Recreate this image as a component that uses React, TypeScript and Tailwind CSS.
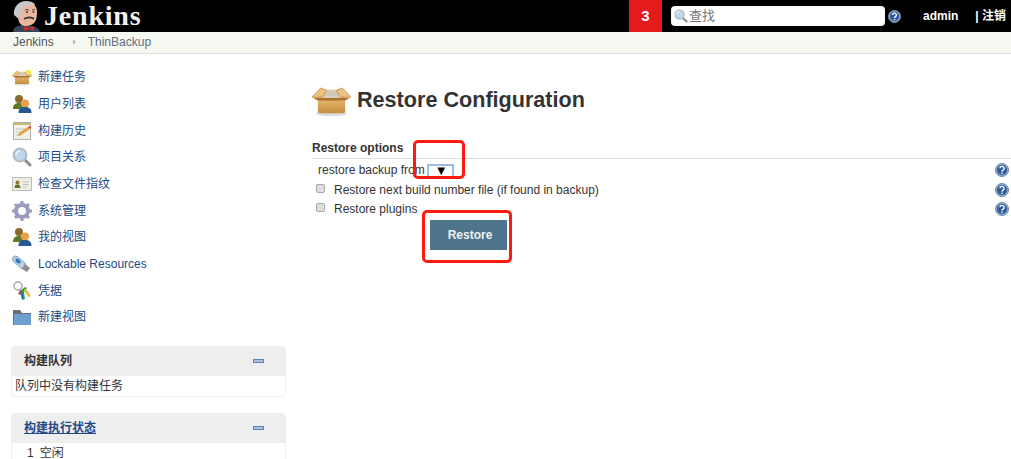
import type { ReactNode } from "react"

const font = "font-['Liberation_Sans','Noto_Sans_CJK_SC',sans-serif]"

function HelpIcon({ size = 14 }: { size?: number }) {
  return (
    <svg width={size} height={size} viewBox="0 0 14 14" className="shrink-0">
      <circle cx="7" cy="7" r="6.5" fill="#8fa8c8" stroke="#6f8db5" strokeWidth="1" />
      <circle cx="7" cy="7" r="5" fill="#2f5c98" />
      <path d="M4.9 5.3a2.100 2 0 1 1 3.100 1.800c-.7.4-1 .8-1 1.600" fill="none" stroke="#fff" strokeWidth="1.400" />
      <rect x="6.300" y="9.600" width="1.400" height="1.400" fill="#fff" />
    </svg>
  )
}

function Box({ size = 24, star = false, id }: { size?: number; star?: boolean; id: string }) {
  return (
    <svg width={size} height={size * 0.8} viewBox="0 0 40 32">
      <defs>
        <linearGradient id={id} x1="0" y1="0" x2="0" y2="1">
          <stop offset="0" stopColor="#e9bc73" />
          <stop offset="1" stopColor="#c48d3f" />
        </linearGradient>
      </defs>
      <ellipse cx="20" cy="29.500" rx="16" ry="2.500" fill="#dcdcdc" />
      <path d="M6 13h28v14q0 2-2 2H8q-2 0-2-2z" fill={`url(#${id})`} />
      <path d="M8 4h24l1 9H7z" fill="#f1e8d6" />
      <path d="M12 7q8-3 16 0v5H12z" fill="#cfc8b8" />
      <path d="M9 3 0 12.500h11l4-7zM31 3l9 9.500H29l-4-7z" fill="#ecc27f" stroke="#b98238" strokeWidth=".7" />
      <path d="M1 13h38l-5 3H6z" fill="#a9712c" />
      {star && <circle cx="33" cy="5" r="5" fill="#f5ec4f" />}
    </svg>
  )
}

function Users() {
  return (
    <svg width="20" height="20" viewBox="0 0 20 20">
      <circle cx="7" cy="5" r="4" fill="#8a6a2a" />
      <path d="M1 15c0-5 3-6 6-6s6 1 6 6z" fill="#5f7a25" />
      <circle cx="13" cy="9.500" r="4" fill="#e8a04a" />
      <path d="M6.500 19c0-5 3-6 6.500-6s6.500 1 6.500 6z" fill="#27598f" />
    </svg>
  )
}

function History() {
  return (
    <svg width="20" height="20" viewBox="0 0 20 20">
      <rect x="1.500" y="1.500" width="17" height="17" fill="#f2f0e4" stroke="#b0b0b0" />
      <path d="M2 2h16v2H2z" fill="#c9b96c" />
      <path d="M4 8h10M4 11h7M4 14h5" stroke="#c0c0c0" />
      <path d="m6 15 1-3 9-6 2 2-9 6z" fill="#e0a040" />
      <path d="m16 6 2 2 1.500-1.500-2-1.500z" fill="#d9443a" />
    </svg>
  )
}

function Search({ size = 20 }: { size?: number }) {
  return (
    <svg width={size} height={size} viewBox="0 0 20 20">
      <path d="m12 12 6 6" stroke="#8d8d8d" strokeWidth="3" strokeLinecap="round" />
      <circle cx="8" cy="8" r="6.500" fill="#bcd6ee" stroke="#b4bcc4" strokeWidth="2" />
      <path d="M4 8a4 4 0 0 1 4-4" stroke="#eef6fc" strokeWidth="1.500" fill="none" />
    </svg>
  )
}

function Fingerprint() {
  return (
    <svg width="20" height="16" viewBox="0 0 20 16">
      <rect x=".5" y="1.500" width="19" height="13" fill="#eeeee6" stroke="#c0c0b8" />
      <circle cx="5.500" cy="6.500" r="2" fill="#8a7a30" />
      <path d="M2.500 12c0-3 1.500-3.500 3-3.500s3 .5 3 3.500z" fill="#5f7a25" />
      <path d="M11 6h6M11 8.500h6M11 11h4" stroke="#c4c4c4" />
    </svg>
  )
}

function Gear() {
  return (
    <svg width="20" height="20" viewBox="0 0 20 20">
      <circle cx="10" cy="10" r="6" fill="none" stroke="#9a9abb" strokeWidth="4" />
      <path d="M10 0v4M10 16v4M0 10h4M16 10h4M3 3l3 3M14 14l3 3M17 3l-3 3M6 14l-3 3" stroke="#9a9abb" strokeWidth="3" />
    </svg>
  )
}

function Usb() {
  return (
    <svg width="20" height="20" viewBox="0 0 20 20">
      <path d="M1 3q2-2 5 0l8 7-4 5-8-7q-3-2-1-5z" fill="#b7d3ea" stroke="#8aa3b8" />
      <ellipse cx="6" cy="7" rx="3" ry="1.800" transform="rotate(40 6 7)" fill="#2a78c4" />
      <path d="m13 10 5 4-3 4-5-3z" fill="#8e8e8e" />
    </svg>
  )
}

function Keys() {
  return (
    <svg width="20" height="20" viewBox="0 0 20 20">
      <circle cx="6" cy="5" r="4" fill="none" stroke="#a8a8a8" strokeWidth="1.500" />
      <path d="m9 9 4-3 2 1-3 4 1 7-3 1z" fill="#35a04a" />
      <path d="m12 8 3 1 4 6-2 1-4-4z" fill="#e0c040" />
      <path d="m8 9-2 4 3 1 1-4z" fill="#d9443a" />
      <path d="m9 10 2 8" stroke="#2a6fb0" strokeWidth="2" />
    </svg>
  )
}

function Folder() {
  return (
    <svg width="20" height="18" viewBox="0 0 20 18">
      <path d="M1 2h7l2 3h9v12H1z" fill="#6b6f74" />
      <path d="M2 6h17v11H2z" fill="#6e9fcf" />
    </svg>
  )
}

const tasks: { icon: ReactNode; label: string }[] = [
  { icon: <Box size={21} star id="box-small" />, label: "新建任务" },
  { icon: <Users />, label: "用户列表" },
  { icon: <History />, label: "构建历史" },
  { icon: <Search />, label: "项目关系" },
  { icon: <Fingerprint />, label: "检查文件指纹" },
  { icon: <Gear />, label: "系统管理" },
  { icon: <Users />, label: "我的视图" },
  { icon: <Usb />, label: "Lockable Resources" },
  { icon: <Keys />, label: "凭据" },
  { icon: <Folder />, label: "新建视图" },
]

function Panel({ title, link, children }: { title: string; link?: boolean; children: ReactNode }) {
  return (
    <div className="rounded-[4px] border border-[#eeeeee] bg-white">
      <div className="flex h-[29px] items-center justify-between bg-[#eeeeee] pl-[12px] pr-[21px]">
        <span className={`text-[12px] font-bold ${link ? "text-[#204a87] underline" : "text-[#333333]"}`}>{title}</span>
        <span className="h-[4px] w-[11px] border border-[#5b84b8] bg-[#a9c0dd]" />
      </div>
      {children}
    </div>
  )
}

function Option({ label }: { label: string }) {
  return (
    <div className="flex h-[19px] items-center pl-[4px]">
      <span className="h-[9px] w-[9px] -translate-y-[1px] rounded-[2px] border border-[#a9a9a9] bg-[#dedede]" />
      <span className="ml-[9px] text-[12px] text-[#333333]">{label}</span>
      <span className="ml-auto mr-[2px]">
        <HelpIcon />
      </span>
    </div>
  )
}

export default function App() {
  return (
    <div className={`relative h-[459px] w-[1011px] overflow-hidden bg-white ${font}`}>
      <header className="flex h-[32px] items-center bg-black">
        <svg width="28" height="32" viewBox="0 0 28 32" className="ml-[13px] shrink-0">
          <path d="M0 32c0-5 5-7 12-7s14 2 15 7z" fill="#33475a" />
          <path d="M3 10C3 5 8 2 14 2s10 4 10 10-1 11-6 13-10 1-12-3z" fill="#e8b9a0" />
          <path d="M1 15C0 7 6 1 13 1s9 3 9 4C15 4 9 7 8 13l-2 6z" fill="#c8c8c8" />
          <path d="M11 19c3-2 8-2 10 0" stroke="#3a3a3a" strokeWidth="1.800" fill="none" />
          <path d="M12 10q2-1 4 0M19 10q2-1 3 0" stroke="#444" strokeWidth="1" fill="none" />
          <circle cx="14" cy="12" r="1" fill="#333" />
          <circle cx="20.500" cy="12" r="1" fill="#333" />
          <path d="m11 26 5 2 5-2v5l-5-2-5 2z" fill="#d8262c" />
        </svg>
        <span className="ml-[3px] font-['Liberation_Serif',serif] text-[28px] font-bold tracking-[0.8px] text-[#f2f2f2]">Jenkins</span>
        <div className="ml-auto flex h-[32px] w-[33px] items-center justify-center bg-[#e41a1c] text-[15px] font-bold text-white">3</div>
        <div className="ml-[9px] flex h-[20px] w-[214px] items-center gap-[1px] rounded-[4px] bg-white pl-[3px] text-[13px] text-[#777777]">
          <Search size={14} />
          查找
        </div>
        <span className="ml-[3px]">
          <HelpIcon size={13} />
        </span>
        <span className="ml-[22px] text-[12px] font-bold text-white">admin</span>
        <span className="ml-[17px] mr-[5px] text-[12px] font-bold text-white">| 注销</span>
      </header>

      <nav className="flex h-[22px] items-center border-b border-[#dddddd] bg-[#f6f8f2] pb-[1px] pl-[13px] text-[12px] text-[#555555]">
        <span>Jenkins</span>
        <span className="ml-[19px] h-0 w-0 border-y-[3px] border-l-[3px] border-y-transparent border-l-[#bbbbbb]" />
        <span className="ml-[12px] text-[#5f6f7f]">ThinBackup</span>
      </nav>

      <div className="flex">
        <aside className="w-[286px] shrink-0 pl-[11px] pt-[10px]">
          <div className="flex flex-col">
            {tasks.map((t) => (
              <div key={t.label} className="flex h-[26.68px] items-center">
                <span className="flex w-[27px] shrink-0 items-center justify-center pl-[1px] pr-[6px]">{t.icon}</span>
                <span className="text-[12px] text-[#204a87]">{t.label}</span>
              </div>
            ))}
          </div>
          <div className="mt-[15px] flex flex-col gap-[16px]">
            <Panel title="构建队列">
              <div className="flex h-[20px] items-center pl-[3px] text-[12px] text-[#333333]">队列中没有构建任务</div>
            </Panel>
            <Panel title="构建执行状态" link>
              <div className="flex h-[20px] items-center gap-[6px] pl-[15px] text-[12px] text-[#333333]">
                <span>1</span>
                <span>空闲</span>
              </div>
            </Panel>
          </div>
        </aside>

        <main className="min-w-0 flex-1 pl-[26px] pt-[31px]">
          <div className="flex h-[31px] items-center gap-[6px]">
            <Box size={39} id="box-large" />
            <h1 className="-mt-[1px] text-[21.6px] font-bold text-[#333333]">Restore Configuration</h1>
          </div>
          <div className="mt-[21px] h-[22px] border-b border-[#dddddd] pt-[2px] text-[12px] font-bold leading-[18px] text-[#333333]">Restore options</div>
          <div className="flex h-[21px] items-center pl-[6px] pt-[1px]">
            <span className="text-[12px] text-[#333333]">restore backup from</span>
            <span className="ml-[2px] mt-[2px] flex h-[15px] w-[27px] items-center justify-center border-2 border-b-0 border-[#9cbce8] bg-white pb-[4px] pl-[2px] text-[13px] leading-none text-black">▼</span>
            <span className="ml-auto mr-[2px]">
              <HelpIcon />
            </span>
          </div>
          <Option label="Restore next build number file (if found in backup)" />
          <Option label="Restore plugins" />
          <button className="ml-[118px] mt-[2px] block h-[30px] w-[77px] bg-[#4d748b] pl-[3px] text-[12px] font-bold text-[#f0f0f0]">Restore</button>
        </main>
      </div>

      <div className="absolute left-[413px] top-[140px] h-[39px] w-[52px] rounded-[5px] border-[3px] border-[#ff1a10]" />
      <div className="absolute left-[422px] top-[210px] h-[53px] w-[90px] rounded-[5px] border-[3px] border-[#ff1a10]" />
    </div>
  )
}
